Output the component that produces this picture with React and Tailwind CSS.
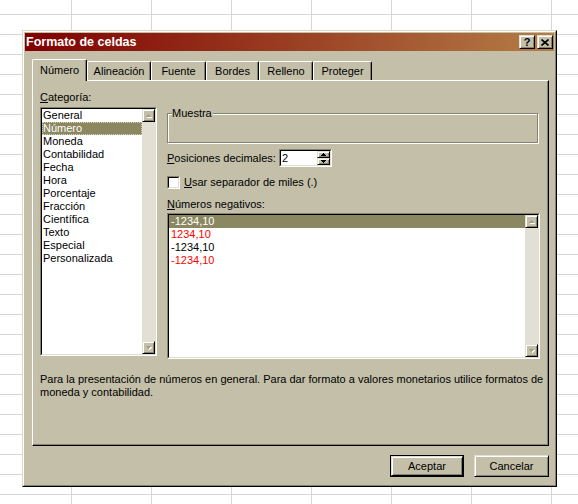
import React from 'react';

const raised =
  'border border-t-[#e2dfd0] border-l-[#e2dfd0] border-r-black border-b-black shadow-[inset_1px_1px_0_#fff,inset_-1px_-1px_0_#85826f]';
const sunkenOuter = 'border border-t-[#85826f] border-l-[#85826f] border-r-white border-b-white';
const sunkenInner = 'border border-t-black border-l-black border-r-[#e2dfd0] border-b-[#e2dfd0]';

const Arrow = ({ down, disabled }) => {
  const rows = down
    ? [[0, 0, 5], [1, 1, 3], [2, 2, 1]]
    : [[2, 0, 1], [1, 1, 3], [0, 2, 5]];
  return (
    <svg width="6" height="4" viewBox="0 0 6 4" className="block">
      {disabled &&
        rows.map(([x, y, w], i) => <rect key={'s' + i} x={x + 1} y={y + 1} width={w} height="1" fill="#fff" />)}
      {rows.map(([x, y, w], i) => (
        <rect key={i} x={x} y={y} width={w} height="1" fill={disabled ? '#a4a08a' : '#000'} />
      ))}
    </svg>
  );
};

const ScrollBar = () => (
  <div className="w-[13px] h-full flex flex-col bg-[#e2e0d4]">
    <div className={`h-[13px] w-[13px] flex items-center justify-center bg-[#c3bfa8] ${raised}`}>
      <Arrow disabled />
    </div>
    <div className="flex-1" />
    <div className={`h-[13px] w-[13px] flex items-center justify-center bg-[#c3bfa8] ${raised}`}>
      <Arrow down disabled />
    </div>
  </div>
);

const Tab = ({ label, w, active }) =>
  active ? (
    <div
      className={`relative z-10 ${w} h-[22px] -mb-px bg-[#c3bfa8] border-t border-l border-r border-t-white border-l-white border-r-black rounded-t-[2px] shadow-[inset_-1px_0_0_#85826f] flex justify-center pt-[4px]`}
    >
      {label}
    </div>
  ) : (
    <div
      className={`${w} h-[19px] bg-[#c3bfa8] border-t border-l border-r border-t-white border-l-white border-r-black rounded-t-[2px] shadow-[inset_-1px_0_0_#85826f] flex justify-center pt-[3px]`}
    >
      {label}
    </div>
  );

const categories = [
  'General',
  'Número',
  'Moneda',
  'Contabilidad',
  'Fecha',
  'Hora',
  'Porcentaje',
  'Fracción',
  'Científica',
  'Texto',
  'Especial',
  'Personalizada',
];

const negatives = [
  { t: '-1234,10', c: 'text-white bg-[#8b8760]' },
  { t: '1234,10', c: 'text-[#ff0000]' },
  { t: '-1234,10', c: 'text-black' },
  { t: '-1234,10', c: 'text-[#ff0000]' },
];

export default function App() {
  return (
    <div className="w-[578px] h-[504px] overflow-hidden bg-white bg-[linear-gradient(to_right,#d6d6d6_1px,transparent_1px),linear-gradient(to_bottom,#d6d6d6_1px,transparent_1px)] bg-size-[80px_20px] bg-position-[71px_14px] pt-[30px] pl-[22px] font-['Liberation_Sans',Arial,sans-serif] text-[11px] leading-[13px] text-black">
      <div className="w-[535px] h-[457px] bg-[#c3bfa8] border border-t-[#dcd8c4] border-l-[#dcd8c4] border-r-black border-b-black">
        <div className="h-full p-px border border-t-white border-l-white border-r-[#85826f] border-b-[#85826f] flex flex-col">
          {/* title bar */}
          <div className="h-[18px] flex items-center justify-between pl-[1px] pr-[1px] bg-[linear-gradient(to_right,#800000,#b47d46)]">
            <span className="text-white font-bold text-[12.5px] leading-[18px]">Formato de celdas</span>
            <div className="flex gap-[2px]">
              <div className={`w-[16px] h-[14px] bg-[#c3bfa8] ${raised} flex items-center justify-center font-bold text-[11px] leading-none`}>
                ?
              </div>
              <div className={`w-[16px] h-[14px] bg-[#c3bfa8] ${raised} flex items-center justify-center`}>
                <svg width="8" height="7" viewBox="0 0 8 7">
                  <path d="M0.5 0.5 L7.5 6.5 M7.5 0.5 L0.5 6.5" stroke="#000" strokeWidth="1.6" />
                </svg>
              </div>
            </div>
          </div>

          {/* tabs */}
          <div className="mt-[8px] ml-[7px] h-[21px] flex items-end">
            <Tab label="Número" w="w-[55px]" active />
            <Tab label="Alineación" w="w-[64px]" />
            <Tab label="Fuente" w="w-[55px]" />
            <Tab label="Bordes" w="w-[53px]" />
            <Tab label="Relleno" w="w-[54px]" />
            <Tab label="Proteger" w="w-[59px]" />
          </div>

          {/* panel */}
          <div className="ml-[7px] w-[517px] h-[366px] border border-t-white border-l-white border-r-black border-b-black shadow-[inset_-1px_-1px_0_#85826f] pl-[7px] pt-[10px]">
            <div className="flex">
              {/* categories */}
              <div className="w-[117px] flex flex-col">
                <div className="h-[13px]">
                  <span className="underline">C</span>ategoría:
                </div>
                <div className={`mt-[3px] h-[249px] ${sunkenOuter}`}>
                  <div className={`h-full bg-white flex ${sunkenInner}`}>
                    <div className="flex-1">
                      {categories.map((c) => (
                        <div
                          key={c}
                          className={
                            c === 'Número'
                              ? 'h-[13px] pl-[1px] bg-[#8b8760] text-white outline-1 outline-dotted outline-[#d8d4c0] -outline-offset-1'
                              : 'h-[13px] pl-[1px]'
                          }
                        >
                          {c}
                        </div>
                      ))}
                    </div>
                    <ScrollBar />
                  </div>
                </div>
              </div>

              {/* right side */}
              <div className="ml-[10px] w-[373px] pt-[22px] flex flex-col">
                <div className="relative w-[371px] h-[30px] border border-[#85826f] shadow-[1px_1px_0_#fff,inset_1px_1px_0_#fff]">
                  <span className="absolute -top-[7px] left-[4px] bg-[#c3bfa8] pr-[1px]">Muestra</span>
                </div>

                <div className="mt-[6px] h-[18px] flex items-center">
                  <div className="w-[112px]">
                    <span className="underline">P</span>osiciones decimales:
                  </div>
                  <div className={`w-[53px] h-[18px] ${sunkenOuter}`}>
                    <div className={`h-full bg-white flex ${sunkenInner}`}>
                      <div className="flex-1 pl-[1px] leading-[14px]">2</div>
                      <div className="w-[13px] flex flex-col">
                        <div className={`h-[7px] bg-[#c3bfa8] ${raised} flex items-center justify-center`}>
                          <Arrow />
                        </div>
                        <div className={`h-[7px] bg-[#c3bfa8] ${raised} flex items-center justify-center`}>
                          <Arrow down />
                        </div>
                      </div>
                    </div>
                  </div>
                </div>

                <div className="mt-[9px] h-[13px] flex items-center">
                  <div className={`w-[13px] h-[13px] ${sunkenOuter}`}>
                    <div className={`h-full bg-white ${sunkenInner}`} />
                  </div>
                  <span className="ml-[4px]">
                    <span className="underline">U</span>sar separador de miles (.)
                  </span>
                </div>

                <div className="mt-[9px] h-[13px]">
                  <span className="underline">N</span>úmeros negativos:
                </div>
                <div className={`mt-[2px] h-[146px] ${sunkenOuter}`}>
                  <div className={`h-full bg-white flex ${sunkenInner}`}>
                    <div className="flex-1">
                      {negatives.map((n, i) => (
                        <div key={i} className={`h-[13px] pl-[2px] ${n.c}`}>
                          {n.t}
                        </div>
                      ))}
                    </div>
                    <ScrollBar />
                  </div>
                </div>
              </div>
            </div>

            <p className="mt-[14px]">
              Para la presentación de números en general. Para dar formato a valores monetarios utilice formatos de
              <br />
              moneda y contabilidad.
            </p>
          </div>

          {/* buttons */}
          <div className="mt-[9px] pr-[5px] flex justify-end gap-[10px]">
            <div className="w-[74px] h-[22px] border border-black">
              <div className={`h-full bg-[#c3bfa8] ${raised} flex items-center justify-center`}>Aceptar</div>
            </div>
            <div className={`w-[75px] h-[22px] bg-[#c3bfa8] ${raised} flex items-center justify-center`}>
              Cancelar
            </div>
          </div>
        </div>
      </div>
    </div>
  );
}
